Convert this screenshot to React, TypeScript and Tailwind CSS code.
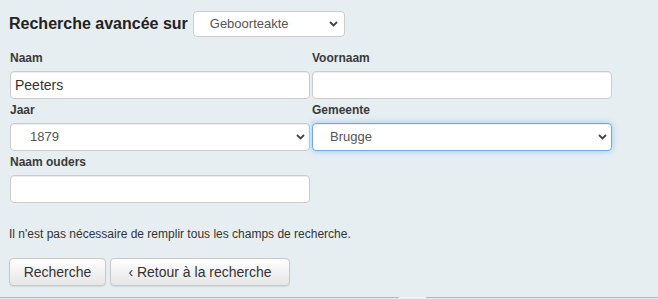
import React from "react";

const font = { fontFamily: '"Liberation Sans", Arial, sans-serif' };

function Chevron() {
  return (
    <svg width="9" height="6" viewBox="0 0 9 6" className="shrink-0">
      <path d="M1 1 L4.5 4.5 L8 1" fill="none" stroke="#444" strokeWidth="1.8" />
    </svg>
  );
}

function SelectBox({ value, focused, chevronRight }: { value: string; focused?: boolean; chevronRight: string }) {
  return (
    <div
      className={
        "flex h-[28px] w-full items-center justify-between rounded-[4px] border bg-white pl-[17px] text-[13px] text-[#555] " +
        chevronRight +
        (focused
          ? " border-[#66afe9] shadow-[inset_0_1px_1px_rgba(0,0,0,0.075),0_0_6px_rgba(102,175,233,0.6)]"
          : " border-[#ccc] shadow-[inset_0_1px_1px_rgba(0,0,0,0.075)]")
      }
    >
      <span>{value}</span>
      <Chevron />
    </div>
  );
}

function TextBox({ value }: { value?: string }) {
  return (
    <div className="flex h-[28px] w-full items-center rounded-[4px] border border-[#ccc] bg-white pl-[4px] text-[14px] text-[#333] shadow-[inset_0_1px_1px_rgba(0,0,0,0.075)]">
      {value}
    </div>
  );
}

function Field({ label, children }: { label: string; children: React.ReactNode }) {
  return (
    <div className="flex flex-col">
      <div className="h-[16px] text-[12px] font-bold leading-[16px] text-[#3a3a3a]">{label}</div>
      <div className="mt-[5px]">{children}</div>
    </div>
  );
}

export default function App() {
  return (
    <div className="relative h-[299px] w-[658px] overflow-hidden bg-[#e7eef2]" style={font}>
      <div className="flex items-center pl-[9px] pt-[11px]">
        <span className="text-[16px] font-bold leading-[26px] text-[#222]">Recherche avancée sur</span>
        <div className="ml-[5px] w-[152px]">
          <div className="flex h-[26px] w-full items-center justify-between rounded-[4px] border border-[#ccc] bg-white pl-[16px] pr-[6px] text-[13px] text-[#555]">
            <span>Geboorteakte</span>
            <Chevron />
          </div>
        </div>
      </div>

      <div className="mt-[13px] grid w-[602px] grid-cols-[300px_300px] gap-x-[2px] gap-y-[3px] pl-[10px]">
        <Field label="Naam">
          <TextBox value="Peeters" />
        </Field>
        <Field label="Voornaam">
          <TextBox />
        </Field>
        <Field label="Jaar">
          <SelectBox value="1879" chevronRight="pr-[4px] pl-[19px]" />
        </Field>
        <Field label="Gemeente">
          <SelectBox value="Brugge" focused chevronRight="pr-[4px]" />
        </Field>
        <Field label="Naam ouders">
          <TextBox />
        </Field>
      </div>

      <div className="mt-[23px] pl-[9px] text-[12px] leading-[16px] text-[#333]">
        Il n'est pas nécessaire de remplir tous les champs de recherche.
      </div>

      <div className="mt-[16px] flex gap-[4px] pl-[9px]">
        <button className="h-[28px] w-[97px] rounded-[4px] border border-[#c8c8c8] bg-gradient-to-b from-white to-[#e6e6e6] text-[14px] text-[#333] shadow-[0_1px_1px_rgba(0,0,0,0.08)]">
          Recherche
        </button>
        <button className="h-[28px] w-[180px] rounded-[4px] border border-[#c8c8c8] bg-gradient-to-b from-white to-[#e6e6e6] text-[14px] text-[#333] shadow-[0_1px_1px_rgba(0,0,0,0.08)]">
          ‹ Retour à la recherche
        </button>
      </div>

      <div className="absolute bottom-[1px] left-0 flex h-[1px] w-full">
        <div className="w-[399px] bg-[#b5b5b5]" />
        <div className="w-[27px] bg-[#f2f5f7]" />
        <div className="flex-1 bg-[#b5b5b5]" />
      </div>
    </div>
  );
}
